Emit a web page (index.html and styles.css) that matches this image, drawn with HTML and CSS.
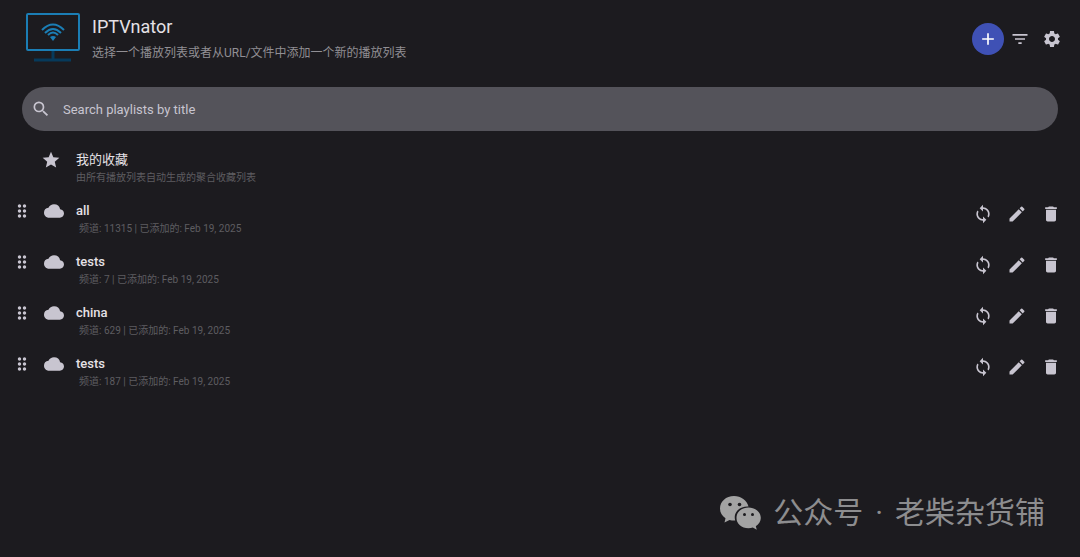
FILE: index.html
```html
<!DOCTYPE html>
<html lang="zh-CN">
<head>
    <meta charset="UTF-8">
    <meta name="viewport" content="width=device-width, initial-scale=1.0">
    <title>IPTVnator</title>
    <link rel="stylesheet" href="styles.css">
</head>
<body>
    <!-- shared icons -->
    <svg class="sprite" aria-hidden="true">
        <symbol id="i-drag" viewBox="0 0 24 24"><path d="M11 18c0 1.100-.9 2-2 2s-2-.9-2-2 .9-2 2-2 2 .9 2 2zm-2-8c-1.100 0-2 .9-2 2s.9 2 2 2 2-.9 2-2-.9-2-2-2zm0-6c-1.100 0-2 .9-2 2s.9 2 2 2 2-.9 2-2-.9-2-2-2zm6 4c1.100 0 2-.9 2-2s-.9-2-2-2-2 .9-2 2 .9 2 2 2zm0 2c-1.100 0-2 .9-2 2s.9 2 2 2 2-.9 2-2-.9-2-2-2zm0 6c-1.100 0-2 .9-2 2s.9 2 2 2 2-.9 2-2-.9-2-2-2z"/></symbol>
        <symbol id="i-cloud" viewBox="0 0 24 24"><path d="M19.350 10.040A7.490 7.490 0 0 0 12 4C9.110 4 6.600 5.640 5.350 8.040A5.994 5.994 0 0 0 0 14c0 3.310 2.690 6 6 6h13c2.760 0 5-2.240 5-5 0-2.640-2.050-4.780-4.650-4.960z"/></symbol>
        <symbol id="i-star" viewBox="0 0 24 24"><path d="M12 17.270L18.180 21l-1.640-7.030L22 9.240l-7.190-.61L12 2 9.190 8.630 2 9.240l5.460 4.730L5.820 21z"/></symbol>
        <symbol id="i-sync" viewBox="0 0 24 24"><path d="M12 4V1L8 5l4 4V6c3.310 0 6 2.690 6 6 0 1.010-.25 1.970-.7 2.800l1.460 1.460A7.930 7.930 0 0 0 20 12c0-4.420-3.580-8-8-8zm0 14c-3.310 0-6-2.690-6-6 0-1.010.25-1.970.7-2.800L5.240 7.740A7.930 7.930 0 0 0 4 12c0 4.420 3.580 8 8 8v3l4-4-4-4v3z"/></symbol>
        <symbol id="i-edit" viewBox="0 0 24 24"><path d="M3 17.250V21h3.750L17.810 9.940l-3.750-3.750L3 17.250zM20.710 7.040a1 1 0 0 0 0-1.410l-2.340-2.340a1 1 0 0 0-1.410 0l-1.830 1.830 3.750 3.750 1.830-1.830z"/></symbol>
        <symbol id="i-delete" viewBox="0 0 24 24"><path d="M6 19c0 1.100.9 2 2 2h8c1.100 0 2-.9 2-2V7H6v12zM19 4h-3.500l-1-1h-5l-1 1H5v2h14V4z"/></symbol>
    </svg>

    <header class="header">
        <svg class="logo" viewBox="0 0 54 50" aria-hidden="true">
            <path d="M27 37v9M8 47h37" stroke="#063a5b" stroke-width="3" fill="none"/>
            <rect x="1" y="1" width="52" height="36" rx="1" fill="none" stroke="#1b7eb5" stroke-width="2"/>
            <g fill="none" stroke="#1b7eb5" stroke-width="2">
                <path d="M16 17q11-11 22 0"/>
                <path d="M19 20q8-8 16 0"/>
                <path d="M22 22q5-5 10 0"/>
            </g>
            <path d="M24 24q3-2 6 0l-3 4z" fill="#1b7eb5"/>
        </svg>
        <div class="heading">
            <h1>IPTVnator</h1>
            <p>选择一个播放列表或者从URL/文件中添加一个新的播放列表</p>
        </div>
        <div class="toolbar">
            <button class="add" aria-label="Add playlist"><svg class="icon" viewBox="0 0 24 24"><path d="M19 13h-6v6h-2v-6H5v-2h6V5h2v6h6v2z"/></svg></button>
            <button aria-label="Sort"><svg class="icon" viewBox="0 0 24 24"><path d="M10 18h4v-2h-4v2zM3 6v2h18V6H3zm3 7h12v-2H6v2z"/></svg></button>
            <button aria-label="Settings"><svg class="icon" viewBox="0 0 24 24"><path d="M19.140 12.940c.04-.3.060-.61.060-.94 0-.32-.02-.64-.07-.94l2.030-1.580c.18-.14.230-.41.120-.61l-1.920-3.320c-.12-.22-.37-.29-.59-.22l-2.390.96c-.5-.38-1.030-.7-1.620-.94l-.36-2.540c-.04-.24-.24-.41-.48-.41h-3.840c-.24 0-.43.170-.47.410l-.36 2.540c-.59.240-1.130.570-1.620.940l-2.390-.96c-.22-.08-.47 0-.59.220L2.740 8.870c-.12.210-.08.470.120.610l2.030 1.580c-.05.300-.09.630-.09.940s.02.640.070.940l-2.030 1.580c-.18.140-.23.410-.12.610l1.920 3.320c.12.220.370.290.590.220l2.390-.96c.5.380 1.030.700 1.620.940l.36 2.540c.05.240.240.410.480.410h3.840c.24 0 .44-.17.470-.41l.36-2.540c.59-.24 1.130-.56 1.620-.94l2.390.96c.22.080.470 0 .59-.22l1.920-3.320c.12-.22.070-.47-.12-.61l-2.010-1.580zM12 15.600c-1.980 0-3.600-1.620-3.600-3.600s1.620-3.600 3.600-3.600 3.600 1.620 3.600 3.600-1.620 3.600-3.600 3.600z"/></svg></button>
        </div>
    </header>

    <label class="search">
        <svg class="icon" viewBox="0 0 24 24" aria-hidden="true"><path d="M15.500 14h-.79l-.28-.27A6.471 6.471 0 0 0 16 9.500 6.500 6.500 0 1 0 9.500 16c1.610 0 3.090-.59 4.230-1.570l.27.280v.79l5 4.990L20.490 19l-4.990-5zm-6 0C7.010 14 5 11.990 5 9.500S7.010 5 9.500 5 14 7.010 14 9.500 11.990 14 9.500 14z"/></svg>
        <input type="text" placeholder="Search playlists by title" aria-label="Search playlists by title">
    </label>

    <main class="playlists">
        <div class="playlist favorites">
            <svg class="icon type"><use href="#i-star"/></svg>
            <div class="info">
                <h2>我的收藏</h2>
                <p>由所有播放列表自动生成的聚合收藏列表</p>
            </div>
        </div>
        <div class="playlist">
            <svg class="icon drag"><use href="#i-drag"/></svg>
            <svg class="icon type"><use href="#i-cloud"/></svg>
            <div class="info">
                <h2>all</h2>
                <p class="meta">频道: 11315 | 已添加的: Feb 19, 2025</p>
            </div>
            <div class="actions">
                <button aria-label="Refresh"><svg class="icon"><use href="#i-sync"/></svg></button>
                <button aria-label="Edit"><svg class="icon"><use href="#i-edit"/></svg></button>
                <button aria-label="Delete"><svg class="icon"><use href="#i-delete"/></svg></button>
            </div>
        </div>
        <div class="playlist">
            <svg class="icon drag"><use href="#i-drag"/></svg>
            <svg class="icon type"><use href="#i-cloud"/></svg>
            <div class="info">
                <h2>tests</h2>
                <p class="meta">频道: 7 | 已添加的: Feb 19, 2025</p>
            </div>
            <div class="actions">
                <button aria-label="Refresh"><svg class="icon"><use href="#i-sync"/></svg></button>
                <button aria-label="Edit"><svg class="icon"><use href="#i-edit"/></svg></button>
                <button aria-label="Delete"><svg class="icon"><use href="#i-delete"/></svg></button>
            </div>
        </div>
        <div class="playlist">
            <svg class="icon drag"><use href="#i-drag"/></svg>
            <svg class="icon type"><use href="#i-cloud"/></svg>
            <div class="info">
                <h2>china</h2>
                <p class="meta">频道: 629 | 已添加的: Feb 19, 2025</p>
            </div>
            <div class="actions">
                <button aria-label="Refresh"><svg class="icon"><use href="#i-sync"/></svg></button>
                <button aria-label="Edit"><svg class="icon"><use href="#i-edit"/></svg></button>
                <button aria-label="Delete"><svg class="icon"><use href="#i-delete"/></svg></button>
            </div>
        </div>
        <div class="playlist">
            <svg class="icon drag"><use href="#i-drag"/></svg>
            <svg class="icon type"><use href="#i-cloud"/></svg>
            <div class="info">
                <h2>tests</h2>
                <p class="meta">频道: 187 | 已添加的: Feb 19, 2025</p>
            </div>
            <div class="actions">
                <button aria-label="Refresh"><svg class="icon"><use href="#i-sync"/></svg></button>
                <button aria-label="Edit"><svg class="icon"><use href="#i-edit"/></svg></button>
                <button aria-label="Delete"><svg class="icon"><use href="#i-delete"/></svg></button>
            </div>
        </div>
    </main>

    <div class="watermark">
        <svg viewBox="0 0 41 34" aria-hidden="true">
            <path fill="#a3a3a3" d="M14 0C6 0 0 5.500 0 12.500c0 4 2 7.500 5.500 9.800L4.500 26.500l5-2.600c1.500.5 3 .7 4.700.7h1C13 17 19 10 28.500 10.500 27 4.500 21 0 14 0z"/>
            <path fill="#a3a3a3" d="M28.500 11.500C21.500 11.500 16.500 16 16.500 22s5 10.200 12 10.200c1.500 0 3-.2 4.300-.7l4 2.200-1-3.500c3.200-2 5-5 5-8.200 0-6-5.500-10.500-12.300-10.500z"/>
            <g fill="#1c1b1f"><circle cx="10" cy="8.500" r="1.800"/><circle cx="19.500" cy="8.500" r="1.800"/><circle cx="24.500" cy="18.500" r="1.500"/><circle cx="32.500" cy="18.500" r="1.500"/></g>
        </svg>
        <span>公众号</span>
        <span>·</span>
        <span>老柴杂货铺</span>
    </div>
</body>
</html>
```
FILE: styles.css
```css
* {
    box-sizing: border-box;
}
body {
    margin: 0;
    min-height: 100vh;
    background: #1c1b1f;
    color: #e5e1e6;
    font-family: Roboto, "Noto Sans CJK SC", sans-serif;
}
h1, h2, p {
    margin: 0;
    font-weight: 400;
}
button {
    display: flex;
    align-items: center;
    justify-content: center;
    width: 32px;
    height: 32px;
    padding: 0;
    border: none;
    border-radius: 50%;
    background: none;
    color: #c8c5d0;
    cursor: pointer;
}
.sprite {
    display: none;
}
.icon {
    width: 20px;
    height: 20px;
    flex-shrink: 0;
    fill: currentColor;
}
.header {
    display: flex;
    padding: 13px 12px 0 26px;
    height: 87px;
}
.logo {
    width: 54px;
    height: 50px;
    margin-right: 12px;
}
.heading {
    flex: 1;
}
.heading h1 {
    font-size: 18px;
    line-height: 28px;
}
.heading p {
    color: #918f94;
    font-size: 12px;
    line-height: 24px;
}
.toolbar {
    display: flex;
    padding-top: 10px;
}
.toolbar .add {
    background: #3f51b5;
    color: white;
}
.search {
    display: flex;
    align-items: center;
    gap: 12px;
    height: 44px;
    margin: 0 22px;
    padding: 0 9px;
    border-radius: 22px;
    background: #54535a;
    color: #c8c5d0;
}
.search input {
    flex: 1;
    padding: 0;
    border: none;
    outline: none;
    background: none;
    color: inherit;
    font: 13px Roboto, "Noto Sans CJK SC", sans-serif;
}
.search input::placeholder {
    color: #c8c5d0;
    opacity: 1;
}
.playlists {
    padding: 13px 13px 0 12px;
}
.playlist {
    display: flex;
    height: 51px;
    padding-top: 6px;
    color: #c8c5d0;
}
.drag {
    margin-right: 12px;
}
.type {
    margin-right: 12px;
}
.favorites .type {
    margin-left: 29px;
    margin-right: 15px;
}
.info {
    flex: 1;
}
.info h2 {
    color: #e5e1e6;
    font-size: 13px;
    font-weight: 500;
    line-height: 20px;
}
.favorites h2 {
    font-weight: 400;
}
.info p {
    color: #5e5d61;
    font-size: 10px;
    line-height: 16px;
}
.info .meta {
    padding-left: 3px;
}
.actions {
    display: flex;
    align-items: center;
    gap: 2px;
    height: 26px;
}
.watermark {
    position: absolute;
    right: 35px;
    bottom: 22px;
    display: flex;
    align-items: center;
    gap: 12px;
    color: #8d8d8f;
    font-size: 30px;
    line-height: 44px;
}
.watermark svg {
    width: 41px;
    height: 34px;
}
```
